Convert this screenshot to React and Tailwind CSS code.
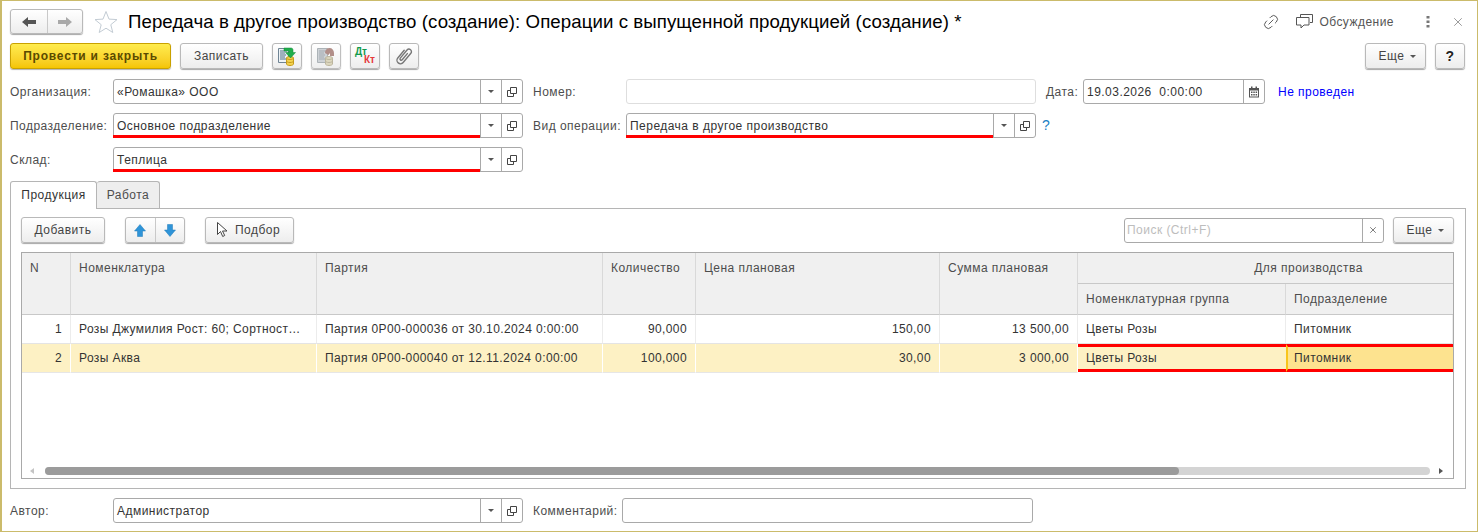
import React from "react";
import { Link2, X } from "lucide-react";

const Caret = ({ c = "#555" }) => (
  <svg width="6" height="3" viewBox="0 0 6 3"><path d="M0 0h6L3 3z" fill={c} /></svg>
);
const OpenIcon = () => (
  <svg width="12" height="12" viewBox="0 0 12 12" fill="none" stroke="#444">
    <path d="M4.5 1.5h6v6h-6z" />
    <path d="M4.5 4.5h-3v6h6v-3" />
  </svg>
);
const CalIcon = () => (
  <svg width="12" height="12" viewBox="0 0 12 12">
    <path d="M1 2h10v9.5H1z" fill="#555" />
    <path d="M2 4.5h8v6H2z" fill="#fff" />
    <path d="M3 0.5h1.5V3H3zM7.5 0.5H9V3H7.5z" fill="#555" />
    <path d="M3 5.5h1.5V7H3zM5.3 5.5h1.5V7H5.3zM7.6 5.5h1.5V7H7.6zM3 8h1.5v1.5H3zM5.3 8h1.5v1.5H5.3zM7.6 8h1.5v1.5H7.6z" fill="#555" />
  </svg>
);

const Seg = ({ w, children }) => (
  <div className={`flex h-full shrink-0 items-center justify-center border-l border-[#a9a9a9] ${w}`}>{children}</div>
);

const Field = ({ value, red, open = true, arrow = true, w = "w-[410px]" }) => (
  <div className={`flex h-[25px] shrink-0 items-stretch rounded-[3px] border border-[#a9a9a9] bg-white ${w}`}>
    <div className={`flex min-w-0 flex-1 items-center text-[#333] ${red ? "-mb-px -ml-px border-b-[3px] border-[#ff0000] pt-[3px] pl-[4px]" : "pl-[3px]"}`}>{value}</div>
    {arrow && <Seg w="w-[21px]"><Caret /></Seg>}
    {open && <Seg w="w-[21px]"><OpenIcon /></Seg>}
  </div>
);

const Btn = ({ children, w, h = "h-[26px]" }) => (
  <button className={`flex shrink-0 items-center justify-center rounded-[3px] border border-[#b9b9b9] bg-gradient-to-b from-white to-[#ededed] text-[#444] shadow-[0_1px_1px_rgba(0,0,0,0.35)] ${w} ${h}`}>
    {children}
  </button>
);

const Label = ({ w, children, className = "" }) => (
  <div className={`shrink-0 text-[#4d4d4d] ${w} ${className}`}>{children}</div>
);

const More = () => (
  <Btn w="w-[61px]">
    <span className="mr-[6px] ml-[4px] text-[#444]">Еще</span>
    <Caret />
  </Btn>
);

const DocIcon = ({ gray }) => {
  const doc = gray ? "#c9ced2" : "#eef3f6";
  const line = gray ? "#9aa3aa" : "#4f6e84";
  const edge = gray ? "#a4abb0" : "#6f8494";
  const coin = gray ? "#d9d3b8" : "#f4d34f";
  const coinE = gray ? "#b5ae94" : "#c49a1c";
  return (
    <svg width="18" height="19" viewBox="0 0 18 19">
      <path d="M0.5 1.500h10v14h-10z" fill={doc} stroke={edge} />
      <path d="M2 4h7M2 6h5M2 8h6M2 10h5M2 12h6" stroke={line} />
      <path d="M8.500 11v6c0 .8 1.500 1.500 3.500 1.500s3.500-.7 3.500-1.500v-6z" fill={coin} stroke={coinE} />
      <ellipse cx="12" cy="11" rx="3.500" ry="1.500" fill={coin} stroke={coinE} />
      <path d="M8.500 14c0 .8 1.500 1.500 3.500 1.500s3.500-.7 3.500-1.500" fill="none" stroke={coinE} />
      {gray ? (
        <path d="M8 6c0-3 2-5 4.500-5S17 3 17 6v3h-4V6l-1.500 2z" fill="#a9827c" />
      ) : (
        <path d="M6 1h7c1.500 0 2 1 2 2v2.500h2.500L12.500 11 7.500 5.500H11V4H6z" fill="#1fae4b" stroke="#128a38" strokeWidth="0.5" />
      )}
    </svg>
  );
};

const ArrowV = ({ up }) => (
  <svg width="12" height="13" viewBox="0 0 12 13" className={up ? "" : "rotate-180"}>
    <path d="M6 0.5 11.500 7H8.500v5.500h-5V7H0.500z" fill="#2f94d8" stroke="#1f7ab8" strokeWidth="0.5" />
  </svg>
);

const HCell = ({ children, cls = "" }) => (
  <div className={`flex border-r border-b border-r-[#d9d9d9] border-b-[#c8c8c8] bg-[#f0f0f0] px-2 text-[#4d4d4d] ${cls}`}>{children}</div>
);

const rows = [
  { n: "1", name: "Розы Джумилия Рост: 60; Сортност…", batch: "Партия 0Р00-000036 от 30.10.2024 0:00:00", q: "90,000", p: "150,00", s: "13 500,00", g: "Цветы Розы", d: "Питомник" },
  { n: "2", name: "Розы Аква", batch: "Партия 0Р00-000040 от 12.11.2024 0:00:00", q: "100,000", p: "30,00", s: "3 000,00", g: "Цветы Розы", d: "Питомник", sel: true },
];

const GRID = "grid grid-cols-[49px_246px_286px_93px_244px_138px_208px_167px]";

const Row = ({ r }) => {
  const base = `flex h-[29px] items-center border-b border-r px-2 ${r.sel ? "border-b-[#e6e6e6] border-r-white bg-[#fdf1c4]" : "border-b-[#e4e4e4] border-r-[#ececec] bg-white"}`;
  return (
    <div className={`${GRID} tracking-[0.4px]`}>
      <div className={`${base} justify-end`}>{r.n}</div>
      <div className={base}>{r.name}</div>
      <div className={base}>{r.batch}</div>
      <div className={`${base} justify-end`}>{r.q}</div>
      <div className={`${base} justify-end`}>{r.p}</div>
      <div className={`${base} justify-end`}>{r.s}</div>
      {r.sel ? (
        <>
          <div className="flex h-[28px] items-center border-y-[3px] border-y-[#ff0000] bg-[#fdf1c4] px-2">{r.g}</div>
          <div className="flex h-[28px] items-center border-y-[3px] border-l-2 border-y-[#ff0000] border-l-[#f8c51c] bg-[#fde38f] px-[6px]">{r.d}</div>
        </>
      ) : (
        <>
          <div className={base}>{r.g}</div>
          <div className={base}>{r.d}</div>
        </>
      )}
    </div>
  );
};

export default function App() {
  return (
    <div className="flex h-[532px] w-[1478px] flex-col border-t border-r border-b border-l-2 border-[#cbbb6b] bg-white pt-[8px] pl-[8px] text-[12px] tracking-[0.47px] text-[#333] [font-family:'Liberation_Sans',Arial,sans-serif]">
      {/* header */}
      <div className="flex h-[25px] items-center">
        <div className="flex h-[25px] w-[73px] rounded-[3px] border border-[#b9b9b9] bg-gradient-to-b from-white to-[#ededed] shadow-[0_1px_1px_rgba(0,0,0,0.35)]">
          <div className="flex w-[37px] items-center justify-center border-r border-[#c9c9c9]">
            <svg width="14" height="10" viewBox="0 0 14 10"><path d="M0 5 6 0v3h8v4H6v3z" fill="#555" /></svg>
          </div>
          <div className="flex flex-1 items-center justify-center">
            <svg width="14" height="10" viewBox="0 0 14 10"><path d="M14 5 8 0v3H0v4h8v3z" fill="#a9a9a9" /></svg>
          </div>
        </div>
        <svg width="24" height="24" viewBox="0 0 24 24" className="ml-[11px]">
          <path d="M12 1.500l3 7.600 8 .5-6.200 5.100 2 7.800L12 18.200 5.200 22.500l2-7.800L1 9.600l8-.5z" fill="#fff" stroke="#c3ccd4" />
        </svg>
        <div className="ml-[10px] text-[18.67px] tracking-[0.07px] whitespace-nowrap text-black">
          Передача в другое производство (создание): Операции с выпущенной продукцией (создание) *
        </div>
        <div className="ml-auto flex items-center pr-[12px]">
          <Link2 size={18} strokeWidth={1.2} className="mr-[16px] -rotate-45 text-[#555]" />
          <svg width="17" height="16" viewBox="0 0 17 16" fill="none" stroke="#555" className="mr-[6px]">
            <path d="M4.500 3V.5h12v8H14" />
            <path d="M.5 3.500h12.500v7.500H8l-3 3v-3H.5z" fill="#fff" />
          </svg>
          <span className="mr-[32px] text-[#555]">Обсуждение</span>
          <svg width="4" height="12" viewBox="0 0 4 12" className="mr-[21px]"><path d="M.5 0h3v2.500h-3zM.5 4.500h3V7h-3zM.5 9h3v2.500h-3z" fill="#777" /></svg>
          <X size={14} strokeWidth={1} className="text-[#555]" />
        </div>
      </div>

      {/* toolbar */}
      <div className="mt-[9px] flex h-[26px] items-center pr-[12px]">
        <button className="h-[26px] w-[161px] shrink-0 rounded-[3px] border border-[#c9a100] bg-gradient-to-b from-[#ffec4d] to-[#f5c500] font-bold tracking-[0.8px] text-[#5a4a00] shadow-[0_1px_1px_rgba(0,0,0,0.3)]">
          Провести и закрыть
        </button>
        <Btn w="ml-[9px] w-[83px]">Записать</Btn>
        <Btn w="ml-[9px] w-[30px]"><DocIcon /></Btn>
        <Btn w="ml-[9px] w-[30px] opacity-90"><DocIcon gray /></Btn>
        <Btn w="ml-[9px] w-[30px]">
          <div className="flex w-[22px] flex-col text-[10px] leading-[8px] font-bold tracking-normal">
            <span className="self-start pl-[1px] text-[#119a4b]">Дт</span>
            <span className="self-end pr-[1px] text-[#e5393b]">Кт</span>
          </div>
        </Btn>
        <Btn w="ml-[9px] w-[30px]">
          <svg width="20" height="20" viewBox="0 0 20 20" fill="none" stroke="#777" strokeWidth="1.4" strokeLinecap="round">
            <path transform="rotate(40 10 10)" d="M6.500 5.500v10a3.500 3.500 0 0 0 7 0V3.500a2.500 2.500 0 0 0-5 0V14a1 1 0 0 0 2.500 0V6" />
          </svg>
        </Btn>
        <div className="ml-auto flex gap-[9px]">
          <More />
          <Btn w="w-[30px]"><span className="text-[14px] font-bold text-[#222]">?</span></Btn>
        </div>
      </div>

      {/* row 1 */}
      <div className="mt-[10px] flex h-[25px] items-center">
        <Label w="w-[103px]">Организация:</Label>
        <Field value="«Ромашка» ООО" />
        <Label w="ml-[10px] w-[93px]">Номер:</Label>
        <div className="h-[25px] w-[410px] shrink-0 rounded-[3px] border border-[#dedede] bg-white" />
        <Label w="ml-[10px] w-[37px]">Дата:</Label>
        <Field value="19.03.2026  0:00:00" w="w-[182px] whitespace-pre" arrow={false} open={false} />
        <div className="-ml-[22px] flex h-[23px] w-[21px] shrink-0 items-center justify-center border-l border-[#a9a9a9]"><CalIcon /></div>
        <div className="ml-[14px] text-[#0000ff]">Не проведен</div>
      </div>
      {/* row 2 */}
      <div className="mt-[9px] flex h-[25px] items-center">
        <Label w="w-[103px]">Подразделение:</Label>
        <Field value="Основное подразделение" red />
        <Label w="ml-[10px] w-[93px]">Вид операции:</Label>
        <Field value="Передача в другое производство" red />
        <div className="ml-[6px] text-[14px] text-[#1a7fc4]">?</div>
      </div>
      {/* row 3 */}
      <div className="mt-[9px] flex h-[25px] items-center">
        <Label w="w-[103px]">Склад:</Label>
        <Field value="Теплица" red />
      </div>

      {/* tabs */}
      <div className="mt-[9px] flex h-[27px]">
        <div className="relative z-10 flex h-[28px] w-[87px] items-center justify-center rounded-t-[3px] border border-b-0 border-[#b5b5b5] bg-white pb-[2px] text-[#333]">Продукция</div>
        <div className="flex h-[27px] w-[63px] items-center justify-center rounded-t-[3px] border border-b-0 border-l-0 border-[#b5b5b5] bg-[#eeeeee] text-[#4d4d4d]">Работа</div>
      </div>

      {/* panel */}
      <div className="flex h-[281px] w-[1456px] flex-col border border-[#b5b5b5] pt-[8px] pr-[11px] pl-[10px]">
        <div className="flex h-[26px] shrink-0 items-center">
          <Btn w="w-[84px]">Добавить</Btn>
          <div className="ml-[20px] flex h-[26px] w-[60px] rounded-[3px] border border-[#b9b9b9] bg-gradient-to-b from-white to-[#ededed] shadow-[0_1px_1px_rgba(0,0,0,0.35)]">
            <div className="flex flex-1 items-center justify-center border-r border-[#c9c9c9]"><ArrowV up /></div>
            <div className="flex flex-1 items-center justify-center"><ArrowV /></div>
          </div>
          <Btn w="ml-[20px] w-[89px]">
            <svg width="11" height="16" viewBox="0 0 11 16" className="mr-[7px] -ml-[2px]"><path d="M.5.5v12l3-3 2.200 5 2-1-2.200-4.500h4.500z" fill="#fff" stroke="#444" /></svg>
            Подбор
          </Btn>
          <div className="ml-auto flex h-[25px] w-[260px] items-stretch rounded-[3px] border border-[#a9a9a9] bg-white">
            <div className="flex flex-1 items-center pl-[2px] text-[#bdbdbd]">Поиск (Ctrl+F)</div>
            <Seg w="w-[21px]"><X size={10} strokeWidth={1.8} className="text-[#555]" /></Seg>
          </div>
          <div className="ml-[9px]"><More /></div>
        </div>

        {/* table */}
        <div className="mt-[9px] flex h-[227px] w-[1433px] shrink-0 flex-col overflow-hidden border border-[#a9a9a9]">
          <div className={`${GRID} h-[62px] shrink-0 grid-rows-[31px_31px]`}>
            <HCell cls="row-span-2 pt-[6px]">N</HCell>
            <HCell cls="row-span-2 pt-[6px]">Номенклатура</HCell>
            <HCell cls="row-span-2 pt-[6px]">Партия</HCell>
            <HCell cls="row-span-2 pt-[6px]">Количество</HCell>
            <HCell cls="row-span-2 pt-[6px]">Цена плановая</HCell>
            <HCell cls="row-span-2 pt-[6px]">Сумма плановая</HCell>
            <HCell cls="col-span-2 items-center justify-center border-r-0 pl-[94px]">Для производства</HCell>
            <HCell cls="items-center">Номенклатурная группа</HCell>
            <HCell cls="items-center border-r-0">Подразделение</HCell>
          </div>
          {rows.map((r) => <Row key={r.n} r={r} />)}
          <div className="flex-1" />
          <div className="mb-[3px] flex h-[8px] shrink-0 items-center">
            <svg width="4" height="6" viewBox="0 0 4 6" className="ml-[8px]"><path d="M4 0v6L0 3z" fill="#c4c4c4" /></svg>
            <div className="ml-[11px] flex h-[8px] w-[1385px] rounded-full bg-[#d4d4d4]">
              <div className="h-[8px] w-[1134px] rounded-full bg-[#9b9b9b]" />
            </div>
            <svg width="4" height="6" viewBox="0 0 4 6" className="ml-[9px]"><path d="M0 0v6l4-3z" fill="#555" /></svg>
          </div>
        </div>
      </div>

      {/* bottom */}
      <div className="mt-[9px] flex h-[25px] items-center">
        <Label w="w-[103px]">Автор:</Label>
        <Field value="Администратор" />
        <Label w="ml-[10px] w-[89px]">Комментарий:</Label>
        <div className="h-[25px] w-[411px] shrink-0 rounded-[3px] border border-[#a9a9a9] bg-white" />
      </div>
    </div>
  );
}
